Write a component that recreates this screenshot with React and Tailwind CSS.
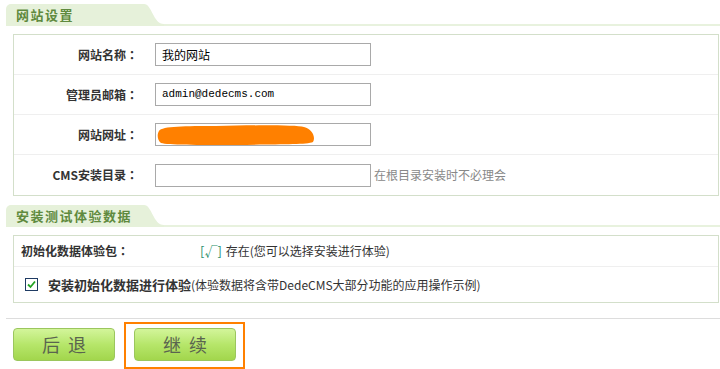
import React from 'react'

const font = { fontFamily: '"Noto Sans CJK SC", "Liberation Sans", sans-serif' }
const colonFont = { fontFamily: '"Noto Sans CJK TC", sans-serif' }

const SectionTitle = ({ title }) => {
  return (
    <div className="relative flex items-end h-[22px] ml-[6px]">
      <div className="h-[22px] bg-[#e6f1da] rounded-tl-[5px] pl-[10px] pr-[6px] flex items-center w-[134px]">
        <span className="text-[13px] font-bold tracking-[1.5px] text-[#5f8a3e]">{title}</span>
      </div>
      <svg width="24" height="22" viewBox="0 0 24 22" className="block">
        <path d="M0 0 H4 C12 0 13 20 24 20 V22 H0 Z" fill="#e6f1da" />
      </svg>
      <div className="flex-1 h-[2px] bg-[#e8f2de]" />
    </div>
  )
}

const Colon = () => <span style={colonFont}>：</span>

const FormRow = ({ label, children, last }) => {
  return (
    <div className={`h-[40px] flex items-center ${last ? '' : 'border-b border-[#efefef]'}`}>
      <div className="w-[124px] text-right text-[12px] font-bold text-[#333]">{label}<Colon /></div>
      <div className="ml-[17px] flex items-center">{children}</div>
    </div>
  )
}

const GreenButton = ({ children, className = '' }) => (
  <button className={`w-[102px] h-[33px] rounded-[4px] border border-[#9bc65e] bg-gradient-to-b from-[#d3f59a] via-[#b6e66a] to-[#a2d64c] text-[18px] text-[#5a644f] tracking-[8px] pl-[8px] block ${className}`}>
    {children}
  </button>
)

export default function App() {
  return (
    <div className="w-[720px] h-[369px] bg-white overflow-hidden pt-[4px]" style={font}>

      {/* 网站设置 */}
      <SectionTitle title="网站设置" />

      <div className="ml-[13px] mr-[1px] mt-[8px] border border-[#d3dfca]">
        <FormRow label="网站名称">
          <div className="w-[216px] h-[23px] border border-[#a9a9a9] px-[6px] flex items-center text-[12px] text-black">
            我的网站
          </div>
        </FormRow>
        <FormRow label="管理员邮箱">
          <div className="w-[216px] h-[23px] border border-[#a9a9a9] px-[6px] flex items-center text-[11px] text-black" style={{ fontFamily: '"Liberation Mono", monospace' }}>
            admin@dedecms.com
          </div>
        </FormRow>
        <FormRow label="网站网址">
          <div className="relative w-[216px] h-[23px] border border-[#a9a9a9]">
            <svg width="170" height="23" viewBox="0 0 170 23" className="absolute left-0 top-[-1px]">
              <path d="M3 8 C6 3 30 3 60 3 C100 2 140 2 148 4 C156 6 160 14 157 19 C150 22 120 21 80 22 C40 22 12 22 5 20 C1 17 1 11 3 8 Z" fill="#ff8000" />
            </svg>
          </div>
        </FormRow>
        <FormRow label="CMS安装目录" last>
          <div className="w-[216px] h-[23px] border border-[#a9a9a9]" />
          <span className="ml-[3px] text-[12px] text-[#888]">在根目录安装时不必理会</span>
        </FormRow>
      </div>

      {/* 安装测试体验数据 */}
      <div className="mt-[9px]">
        <SectionTitle title="安装测试体验数据" />
      </div>

      <div className="ml-[13px] mr-[1px] mt-[8px] border border-[#d3dfca]">
        <div className="h-[31px] flex items-center border-b border-[#efefef] pl-[7px]">
          <div className="w-[179px] text-[12px] font-bold text-[#333]">初始化数据体验包<Colon /></div>
          <span className="text-[13px] text-[#2b8f6b]">[√]</span>
          <span className="ml-[4px] text-[12px] text-[#333]">存在(您可以选择安装进行体验)</span>
        </div>
        <div className="h-[35px] flex items-center pl-[11px]">
          <div className="w-[13px] h-[13px] border border-[#1f3b63] bg-white flex items-center justify-center">
            <svg width="9" height="9" viewBox="0 0 9 9">
              <path d="M1 4.5 L3.5 7 L8 1.5" stroke="#22a322" strokeWidth="1.8" fill="none" />
            </svg>
          </div>
          <span className="ml-[10px] text-[13px] font-bold text-[#333]">安装初始化数据进行体验</span>
          <span className="text-[12px] text-[#333]">(体验数据将含带DedeCMS大部分功能的应用操作示例)</span>
        </div>
      </div>

      {/* Buttons */}
      <div className="ml-[6px] mt-[15px] border-t border-[#dddddd] flex items-start pl-[7px] pt-[3px]">
        <GreenButton className="mt-[6px]">后退</GreenButton>
        <div className="ml-[9px] border-2 border-[#ff8000] pl-[8px] pr-[7px] pt-[4px] pb-[6px]">
          <GreenButton>继续</GreenButton>
        </div>
      </div>
    </div>
  )
}
